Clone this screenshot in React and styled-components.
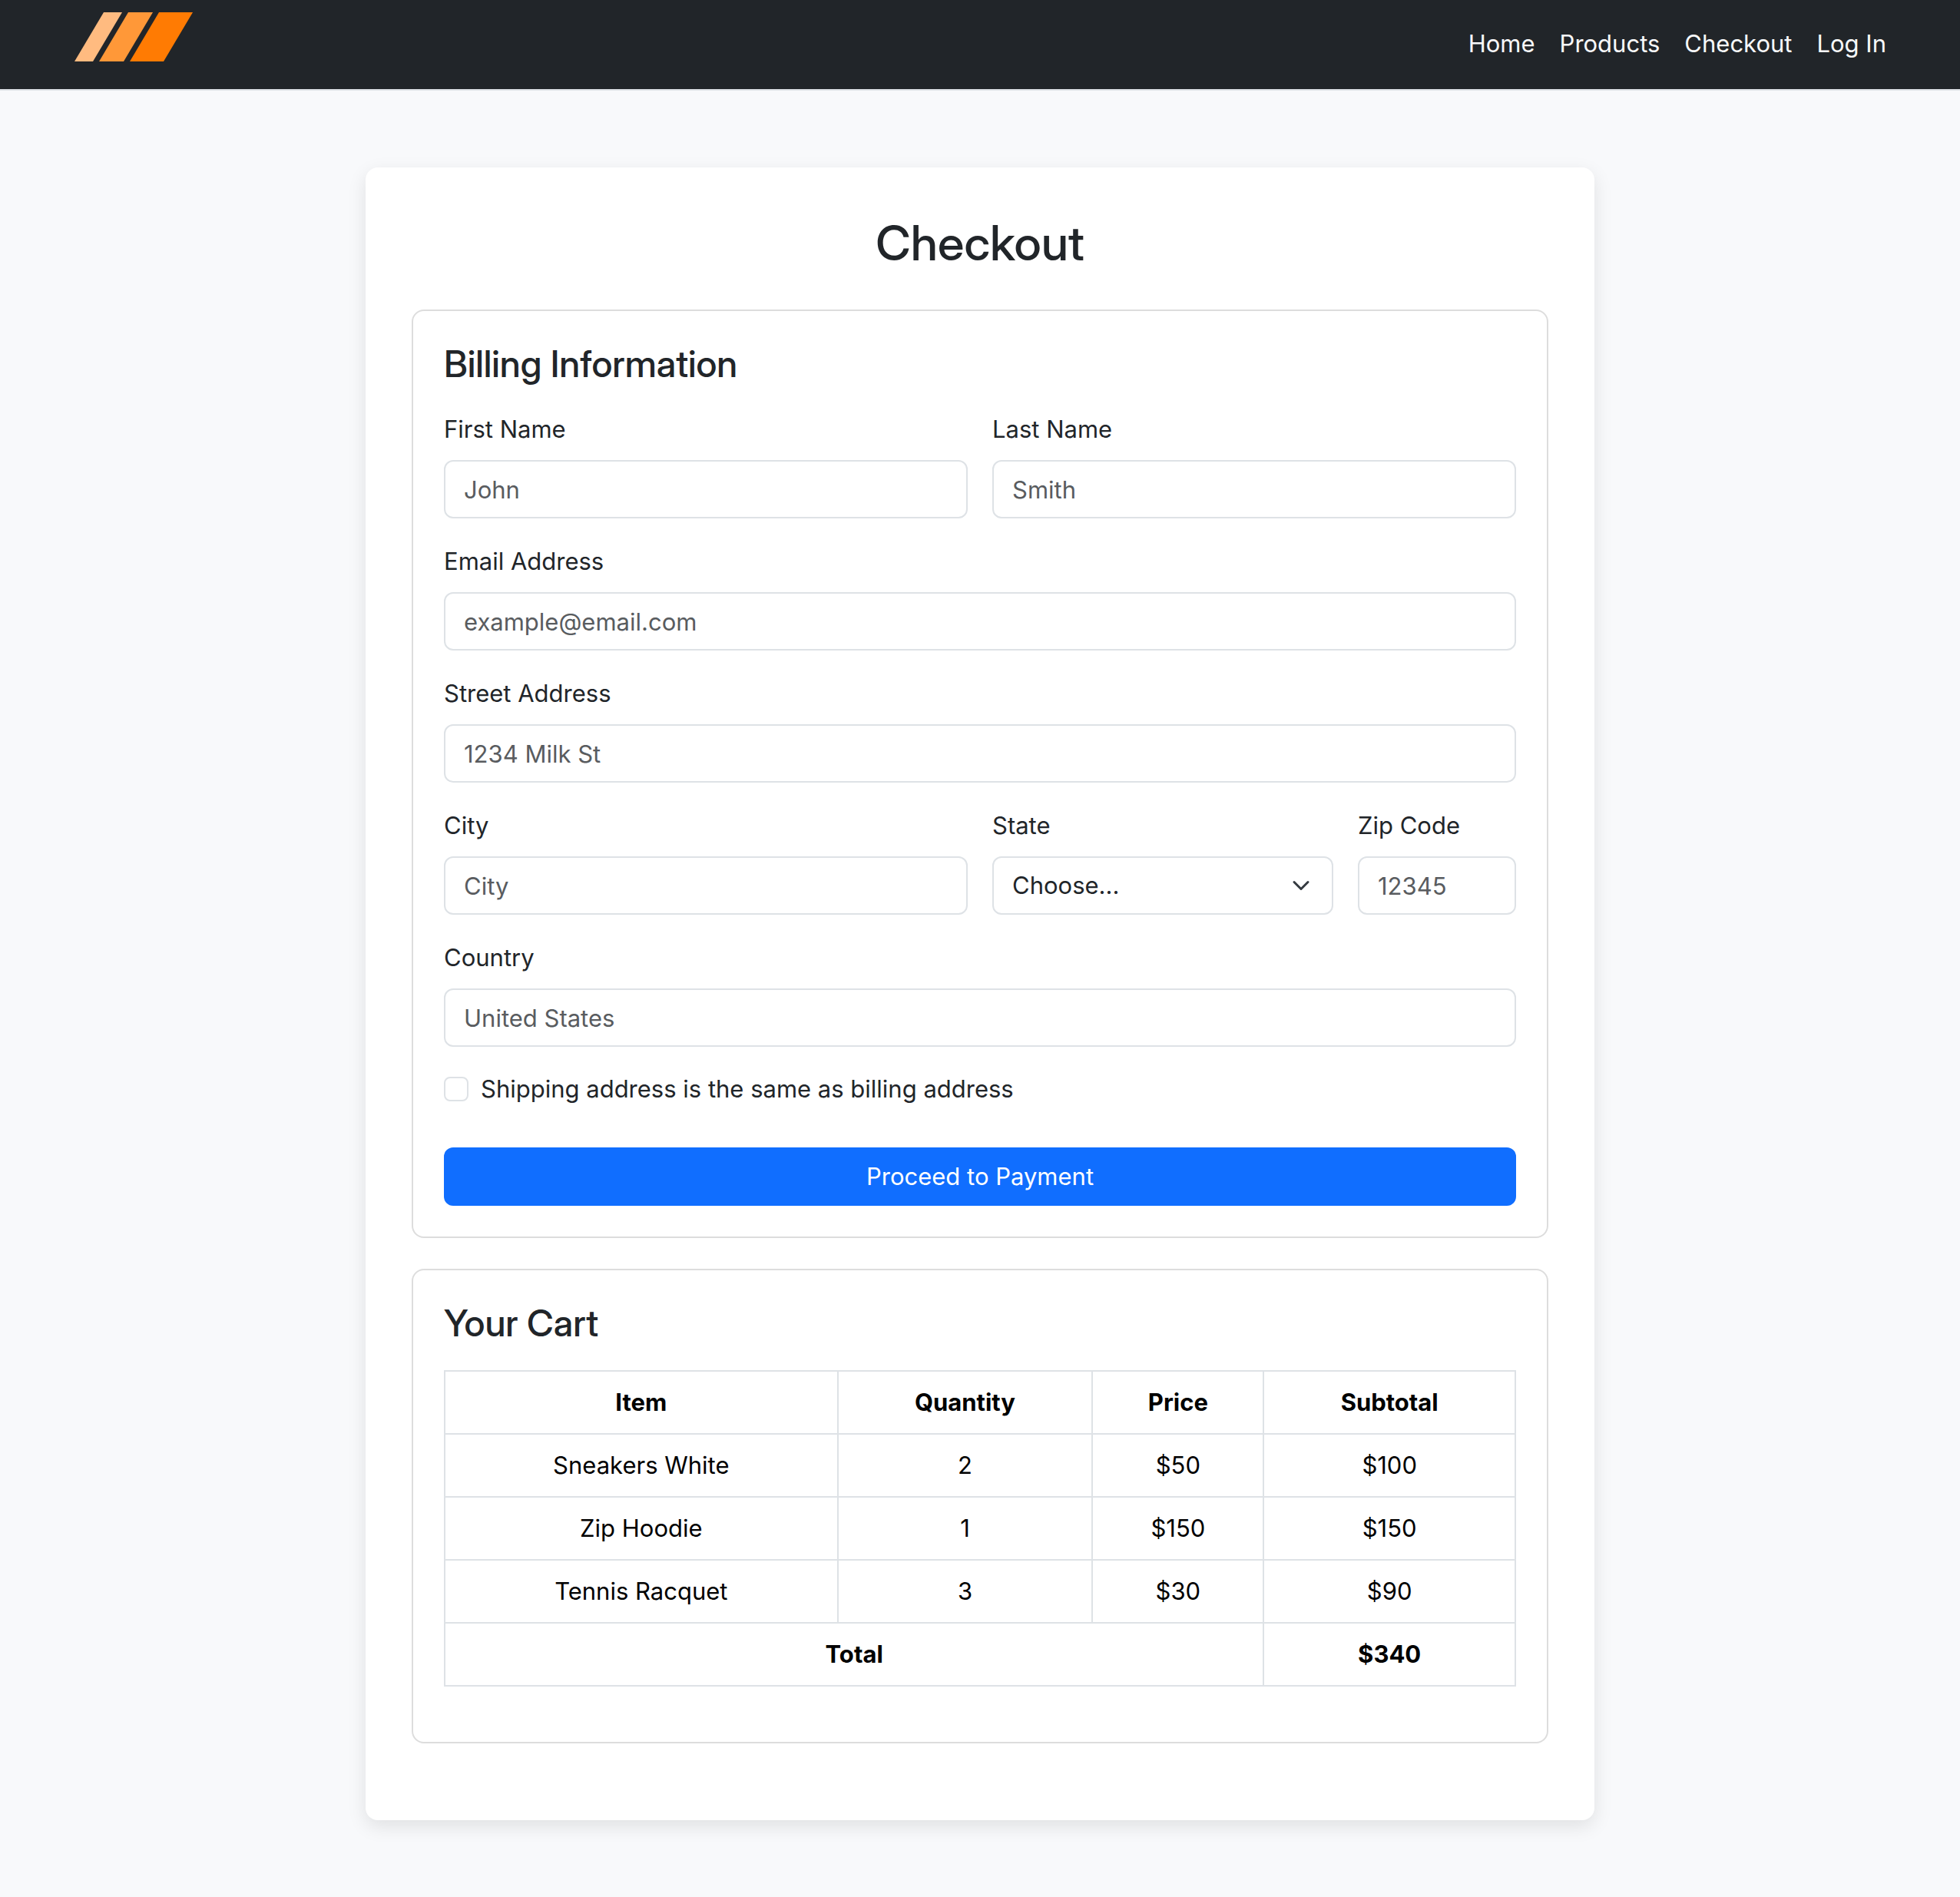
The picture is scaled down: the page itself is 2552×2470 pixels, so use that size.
import React from "react";
import styled, { createGlobalStyle } from "styled-components";

const color = {
  page: "#f8f9fb",
  ink: "#212529",
  line: "#dee2e6",
  panelLine: "#dddddd",
  muted: "#595c5f",
  primary: "#106eff",
};

const GlobalStyle = createGlobalStyle`
  *, *::before, *::after { box-sizing: border-box; }
  body {
    margin: 0;
    background: ${color.page};
    color: ${color.ink};
    font-family: Inter, "Liberation Sans", sans-serif;
    font-size: 31px;
    line-height: 48px;
  }
  h1, h2 {
    font-family: "Inter Display", Inter, "Liberation Sans", sans-serif;
    font-weight: 500;
  }
  input, select, button { font: inherit; color: inherit; margin: 0; }
`;

const Header = styled.header`
  display: flex;
  align-items: center;
  justify-content: space-between;
  min-height: 118px;
  padding: 16px 96px 18px;
  background: ${color.ink};
  border-bottom: 2px solid ${color.line};
`;

const Brand = styled.a`
  display: block;
  align-self: flex-start;
  svg { display: block; }
`;

const Nav = styled.nav`
  display: flex;
  gap: 32px;
`;

const NavLink = styled.a`
  color: #f8f9fa;
  text-decoration: none;
`;

const Card = styled.main`
  max-width: 1600px;
  margin: 100px auto;
  padding: 60px;
  background: #fff;
  border-radius: 16px;
  box-shadow: 0 8px 24px rgba(0, 0, 0, 0.1);
`;

const Title = styled.h1`
  margin: 0 0 48px;
  font-size: 63px;
  line-height: 77px;
  text-align: center;
`;

const Panel = styled.section`
  margin-bottom: 40px;
  padding: 40px;
  border: 2px solid ${color.panelLine};
  border-radius: 16px;
`;

const PanelTitle = styled.h2`
  margin: 0 0 32px;
  font-size: 48px;
  line-height: 58px;
`;

const FieldGrid = styled.div`
  display: grid;
  grid-template-columns: repeat(12, 1fr);
  gap: 32px;
`;

const FieldBox = styled.div`
  grid-column: span ${(p) => p.$span};
  display: flex;
  flex-direction: column;
  gap: 16px;
  min-width: 0;
`;

const TextInput = styled.input`
  width: 100%;
  height: 76px;
  padding: 12px 24px;
  background: #fff;
  border: 2px solid ${color.line};
  border-radius: 12px;
  outline-color: #86b7fe;
  &::placeholder { color: ${color.muted}; opacity: 1; }
`;

const SelectWrap = styled.div`
  display: grid;
  align-items: center;
  > * { grid-area: 1 / 1; }
  svg {
    justify-self: end;
    margin-right: 30px;
    pointer-events: none;
  }
`;

const Select = styled(TextInput).attrs({ as: "select" })`
  appearance: none;
  padding-right: 72px;
`;

const CheckRow = styled.div`
  display: flex;
  align-items: center;
  gap: 16px;
  margin: 31px 0 52px;
`;

const Checkbox = styled.input`
  appearance: none;
  flex: none;
  width: 32px;
  height: 32px;
  background: #fff;
  border: 2px solid ${color.line};
  border-radius: 8px;
  &:checked {
    background: ${color.primary};
    border-color: ${color.primary};
  }
`;

const SubmitButton = styled.button`
  display: block;
  width: 100%;
  height: 76px;
  padding: 0 24px;
  color: #fff;
  background: ${color.primary};
  border: 0;
  border-radius: 12px;
  cursor: pointer;
`;

const CartTable = styled.table`
  width: 100%;
  margin-bottom: 32px;
  table-layout: fixed;
  border-collapse: collapse;
  color: #000;
  text-align: center;
  th, td {
    height: 82px;
    padding: 16px;
    border: 2px solid ${color.line};
  }
  th { font-weight: 700; }
`;

const Col = styled.col`
  width: ${(p) => p.$width};
`;

function Logo() {
  return (
    <svg width="156" height="64" viewBox="0 0 156 64" aria-hidden="true">
      <path d="M1 64 39 0H63L25 64Z" fill="#ffbb80" />
      <path d="M33 64 71 0H103L65 64Z" fill="#ff9838" />
      <path d="M73 64 111 0H155L117 64Z" fill="#ff7b03" />
    </svg>
  );
}

function Chevron() {
  return (
    <svg width="24" height="24" viewBox="0 0 16 16" fill="none" aria-hidden="true">
      <path
        d="m2 5 6 6 6-6"
        stroke="#343a40"
        strokeWidth="2"
        strokeLinecap="round"
        strokeLinejoin="round"
      />
    </svg>
  );
}

function Field({ id, label, span = 12, placeholder, type = "text" }) {
  return (
    <FieldBox $span={span}>
      <label htmlFor={id}>{label}</label>
      <TextInput id={id} type={type} placeholder={placeholder} />
    </FieldBox>
  );
}

const links = ["Home", "Products", "Checkout", "Log In"];

const columns = [
  { name: "Item", width: "36.7%" },
  { name: "Quantity", width: "23.8%" },
  { name: "Price", width: "16%" },
  { name: "Subtotal", width: "23.5%" },
];

const cart = [
  { item: "Sneakers White", quantity: 2, price: 50 },
  { item: "Zip Hoodie", quantity: 1, price: 150 },
  { item: "Tennis Racquet", quantity: 3, price: 30 },
];

const total = cart.reduce((sum, row) => sum + row.quantity * row.price, 0);

export default function App() {
  return (
    <>
      <GlobalStyle />
      <Header>
        <Brand href="#" aria-label="Store home">
          <Logo />
        </Brand>
        <Nav>
          {links.map((name) => (
            <NavLink key={name} href="#">
              {name}
            </NavLink>
          ))}
        </Nav>
      </Header>

      <Card>
        <Title>Checkout</Title>

        <Panel>
          <PanelTitle>Billing Information</PanelTitle>
          <form onSubmit={(e) => e.preventDefault()}>
            <FieldGrid>
              <Field id="firstName" label="First Name" span={6} placeholder="John" />
              <Field id="lastName" label="Last Name" span={6} placeholder="Smith" />
              <Field
                id="email"
                type="email"
                label="Email Address"
                placeholder="example@email.com"
              />
              <Field id="street" label="Street Address" placeholder="1234 Milk St" />
              <Field id="city" label="City" span={6} placeholder="City" />
              <FieldBox $span={4}>
                <label htmlFor="state">State</label>
                <SelectWrap>
                  <Select id="state" defaultValue="">
                    <option value="">Choose...</option>
                  </Select>
                  <Chevron />
                </SelectWrap>
              </FieldBox>
              <Field id="zip" label="Zip Code" span={2} placeholder="12345" />
              <Field id="country" label="Country" placeholder="United States" />
            </FieldGrid>
            <CheckRow>
              <Checkbox id="sameAddress" type="checkbox" />
              <label htmlFor="sameAddress">
                Shipping address is the same as billing address
              </label>
            </CheckRow>
            <SubmitButton type="submit">Proceed to Payment</SubmitButton>
          </form>
        </Panel>

        <Panel>
          <PanelTitle>Your Cart</PanelTitle>
          <CartTable>
            <colgroup>
              {columns.map((c) => (
                <Col key={c.name} $width={c.width} />
              ))}
            </colgroup>
            <thead>
              <tr>
                {columns.map((c) => (
                  <th key={c.name} scope="col">
                    {c.name}
                  </th>
                ))}
              </tr>
            </thead>
            <tbody>
              {cart.map((row) => (
                <tr key={row.item}>
                  <td>{row.item}</td>
                  <td>{row.quantity}</td>
                  <td>{`$${row.price}`}</td>
                  <td>{`$${row.quantity * row.price}`}</td>
                </tr>
              ))}
            </tbody>
            <tfoot>
              <tr>
                <th colSpan={3} scope="row">
                  Total
                </th>
                <th>{`$${total}`}</th>
              </tr>
            </tfoot>
          </CartTable>
        </Panel>
      </Card>
    </>
  );
}
